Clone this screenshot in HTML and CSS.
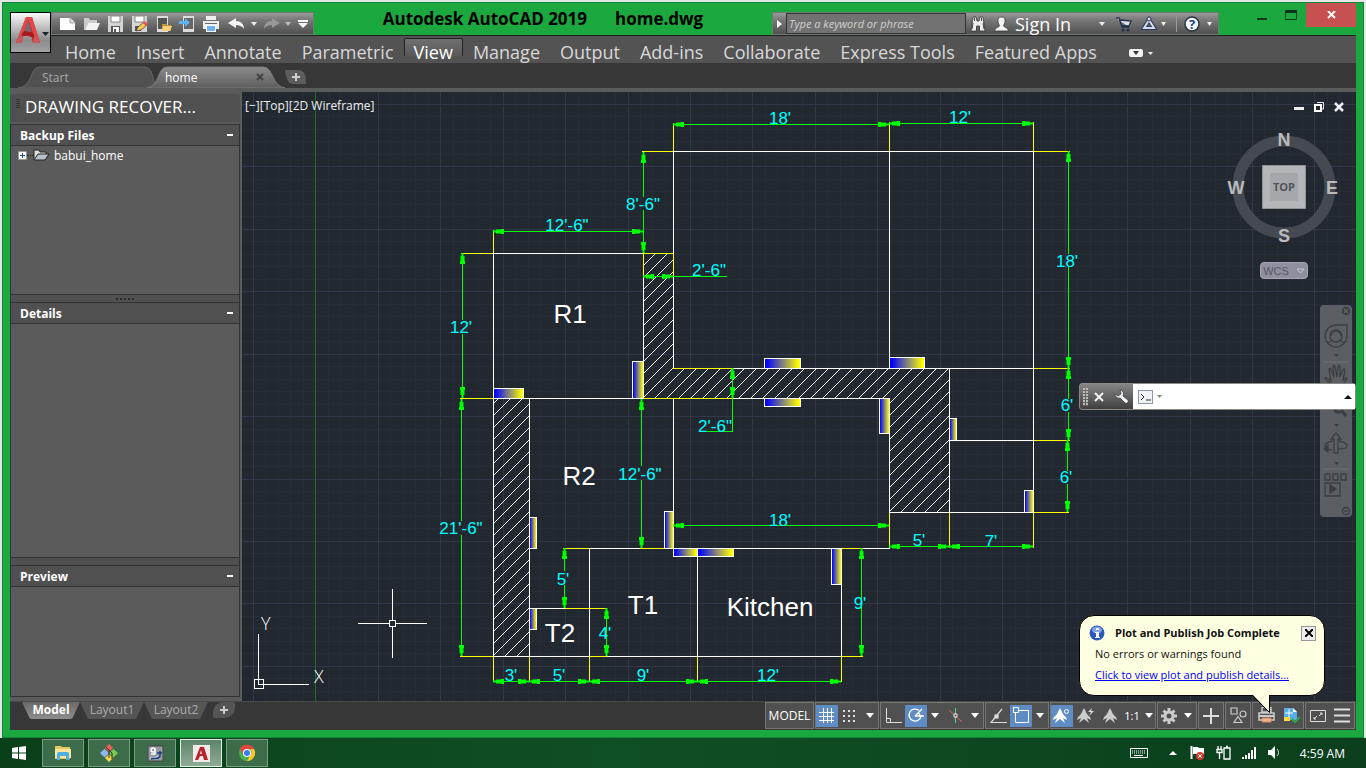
FILE: index.html
```html
<!DOCTYPE html>
<html lang="en">
<head>
<meta charset="utf-8">
<title>Autodesk AutoCAD 2019 - home.dwg</title>
<link rel="stylesheet" href="styles.css">
</head>
<body>
<div class="window">
  <header class="titlebar">
    <button class="app-button" aria-label="Application menu">
      <svg width="37" height="38" viewBox="0 0 37 38">
        <path d="M4 29 14 3h6l8 26h-7l-1.500-6-8-2-2 8z" fill="#c3272d"/>
        <path d="M14 3h6l8 26-4-1L16.500 6 8 28l-4 1z" fill="#e0484c"/>
        <path d="M12 17l4.500-10 3 11z" fill="#7b6a6b"/>
        <path d="M8 23l4-6 9 2 2 6-6-4z" fill="#a31a20"/>
        <path d="M4 29l5-8 2 1-1 7zM22 22l6 7h-7z" fill="#c95a5c"/>
        <path d="M30 18h7l-3.500 4z" fill="#1d2430"/>
      </svg>
    </button>
    <div class="quick-access">
      <button aria-label="New"><svg width="17" height="16"><path d="M1 2h10l5 5v7H1z" fill="#fff"/><path d="M11 1v6h6z" fill="#ddd" stroke="#777" stroke-width=".6"/></svg></button>
      <button aria-label="Open"><svg width="17" height="16"><path d="M1 14V2h5l1 2h7v3H5L2 14z" fill="#ccc"/><path d="M5 7h12l-3 7H2z" fill="#f3f3f3"/></svg></button>
      <button aria-label="Save"><svg width="17" height="16"><path d="M1 0h15v16H1z" fill="#d4d4d4"/><path d="M4 0h9v6H4z" fill="#fff" stroke="#888"/><path d="M4 10h9v6H4z" fill="#555"/><path d="M6 11h6v5H6z" fill="#fff"/><path d="M7 13h2v3H7z" fill="#555"/></svg></button>
      <button aria-label="Save as"><svg width="17" height="16"><path d="M1 0h15v16H1z" fill="#d4d4d4"/><path d="M4 0h9v6H4z" fill="#fff" stroke="#888"/><path d="M4 10h6v5H4z" fill="#555"/><path d="M5 15l2-4 6-5 3 3-6 5z" fill="#f7c752" stroke="#333" stroke-width=".7"/><path d="M12 7l2-2 3 3-2 2z" fill="#e0525a"/></svg></button>
      <button aria-label="Open from mobile"><svg width="17" height="16"><path d="M2 0h11v16H2z" fill="#ddd"/><path d="M3 2h9v11H3z" fill="#555"/><path d="M7 15V8h4l1 1h4v6z" fill="#c98f36"/><path d="M8 10h9l-2 5H7z" fill="#f9d27b"/></svg></button>
      <button aria-label="Save to mobile"><svg width="17" height="16"><path d="M4 0h11v16H4z" fill="#ddd"/><path d="M5 2h9v11H5z" fill="#666"/><path d="M0 5h6V2l5 4.500L6 11V8H0z" fill="#5db2f0"/></svg></button>
      <button aria-label="Plot"><svg width="18" height="16"><path d="M4 0h10v4H4zM1 5h16v8H1z" fill="#eee"/><path d="M3 7h12v1H3z" fill="#666"/><path d="M4 9h10v7H4z" fill="#fff"/><path d="M5 10h8v5H5z" fill="#6cb4ee"/></svg></button>
      <button class="undo" aria-label="Undo"><svg width="19" height="14"><path d="M1 6l8-5v3c5 0 8 3 8 8-2-3-5-4-8-4v3z" fill="#f4f4f4"/></svg></button>
      <button class="drop" aria-label="Undo list"><svg width="6" height="4"><path d="M0 0h6L3 4z" fill="#eee"/></svg></button>
      <button aria-label="Redo"><svg width="19" height="14"><path d="M18 6l-8-5v3c-5 0-8 3-8 8 2-3 5-4 8-4v3z" fill="#989898"/></svg></button>
      <button class="drop" aria-label="Redo list"><svg width="6" height="4"><path d="M0 0h6L3 4z" fill="#bbb"/></svg></button>
      <button class="customize" aria-label="Customize toolbar"><svg width="10" height="8"><path d="M0 0h10v2H0zM0 3h10L5 8z" fill="#f4f4f4"/></svg></button>
    </div>
    <h1 class="window-title"><span>Autodesk AutoCAD 2019</span><span>home.dwg</span></h1>
    <div class="info-center">
      <button class="expander" aria-label="Collapse search"><svg width="5" height="8"><path d="M0 0l5 4-5 4z" fill="#fff"/></svg></button>
      <input class="search" type="text" placeholder="Type a keyword or phrase" aria-label="Search">
      <button class="find" aria-label="Search"><svg width="16" height="16"><path d="M3 1h3l1 4h2l1-4h3l2 14H9.500V10h-3v5H1z" fill="#eee" stroke="#333" stroke-width=".8"/><path d="M3 7l-1 6M13 7l1 6M4.500 2v3M11.500 2v3" stroke="#444"/></svg></button>
      <button class="sign-in"><svg width="15" height="16"><path d="M7.500 1c3 0 4 2 3.500 5-.5 2-1.500 3-1.500 4 0 1 5 1.500 5 5H.5c0-3.500 5-4 5-5 0-1-1-2-1.500-4C3.500 3 4.500 1 7.500 1z" fill="#f2f2f2" stroke="#333" stroke-width=".8"/></svg>Sign In<svg class="push" width="6" height="4"><path d="M0 0h6L3 4z" fill="#eee"/></svg></button>
      <button class="store" aria-label="App store"><svg width="17" height="16"><path d="M1 2h3l3 9h7M5 4l11 1-2 5H6.500" fill="#dfe3ea" stroke="#1f2e4c" stroke-width="1.300"/><circle cx="8" cy="14" r="1.500" fill="#1f2e4c"/><circle cx="13" cy="14" r="1.500" fill="#1f2e4c"/></svg></button>
      <button class="linked" aria-label="Autodesk 360"><svg width="16" height="16"><path d="M8 4L3 12h10z" fill="none" stroke="#26365a" stroke-width="4"/><path d="M8 4L3 12h10z" fill="none" stroke="#d5dcea" stroke-width="2"/><circle cx="8" cy="3" r="2" fill="#d5dcea" stroke="#26365a"/></svg><svg width="5" height="4"><path d="M0 0h5L2.500 4z" fill="#eee"/></svg></button>
      <button class="help" aria-label="Help"><svg width="17" height="16"><circle cx="8" cy="8" r="7" fill="#f5f7fa" stroke="#2b3440" stroke-width="1.500"/><text x="8" y="12.500" class="help-mark">?</text></svg><svg width="5" height="4"><path d="M0 0h5L2.500 4z" fill="#eee"/></svg></button>
    </div>
    <div class="window-controls">
      <button aria-label="Minimize"><svg width="12" height="16"><path d="M0 11h10v2H0z" fill="#12341d"/></svg></button>
      <button aria-label="Maximize"><svg width="13" height="16"><path d="M.5 3.500h11v9H.5z" fill="none" stroke="#123f20"/><path d="M0 3h12v3H0z" fill="#12341d"/></svg></button>
      <button class="close" aria-label="Close"><svg width="9" height="8"><path d="M1 0l7 7M8 0L1 7" stroke="#fff" stroke-width="2"/></svg></button>
    </div>
  </header>

  <nav class="ribbon">
    <a href="#home">Home</a><a href="#insert">Insert</a><a href="#annotate">Annotate</a><a href="#parametric">Parametric</a><a href="#view" class="active">View</a><a href="#manage">Manage</a><a href="#output">Output</a><a href="#addins">Add-ins</a><a href="#collaborate">Collaborate</a><a href="#express">Express Tools</a><a href="#featured">Featured Apps</a>
    <button class="ribbon-toggle" aria-label="Minimize ribbon"><svg width="24" height="10"><rect y="1" width="14" height="8" rx="2" fill="#f4f4f4"/><path d="M4 3h6L7 7z" fill="#333"/><path d="M19 4h5l-2.500 3z" fill="#eee"/></svg></button>
  </nav>

  <div class="file-tabs">
    <a href="#start" class="file-tab">
      <svg class="tab-shape" viewBox="0 0 148 22" preserveAspectRatio="none"><path d="M0 22C16 20 11 1 22 1h104c9 0 8 10 12 21z" fill="#515151" stroke="#656565"/></svg>
      <span>Start</span></a>
    <div class="file-tab current">
      <svg class="tab-shape" viewBox="0 0 148 22" preserveAspectRatio="none"><defs><linearGradient id="tabFill" x2="0" y2="1"><stop stop-color="#8b8b8b"/><stop offset="1" stop-color="#5e5e5e"/></linearGradient></defs><path d="M0 22C13 20 10 1 20 1h96c11 0 8 19 22 21z" fill="url(#tabFill)" stroke="#7a7a7a"/></svg>
      <span>home</span>
      <button aria-label="Close home"><svg width="9" height="8"><path d="M1 1l6 6M7 1L1 7" stroke="#444" stroke-width="2"/></svg></button></div>
    <button class="new-tab" aria-label="New drawing"><svg width="22" height="15"><path d="M1 0h13c6 0 8 4 8 14H9C4 14 2 8 1 0z" fill="#5c5c5c"/><path d="M8 7h8M12 3v8" stroke="#ccc" stroke-width="2"/></svg></button>
  </div>

  <main class="workspace">
    <aside class="recovery">
      <h2 class="palette-title"><i class="grip"></i>DRAWING RECOVER...</h2>
      <section class="pane backup">
        <h3>Backup Files<button aria-label="Collapse backup files"></button></h3>
        <div class="pane-body">
          <div class="tree-item"><button class="expand" aria-label="Expand babui_home"><svg width="9" height="9"><path d="M.5.5h8v8h-8z" fill="#fff" stroke="#999"/><path d="M2 4.500h5M4.500 2v5" stroke="#264a9c"/></svg></button><i class="dots"></i><svg width="17" height="12"><path d="M1 11V1h5l1 2h6v2" fill="#ddd" stroke="#222"/><path d="M1 11l4-6h11l-4 6z" fill="#b9c0c9" stroke="#222"/></svg><span>babui_home</span></div>
        </div>
      </section>
      <div class="splitter"><i></i></div>
      <section class="pane details">
        <h3>Details<button aria-label="Collapse details"></button></h3>
        <div class="pane-body"></div>
      </section>
      <div class="splitter"></div>
      <section class="pane preview">
        <h3>Preview<button aria-label="Collapse preview"></button></h3>
        <div class="pane-body"></div>
      </section>
    </aside>

    <div class="viewport">
      <svg class="drawing" aria-label="Floor plan">
        <defs>
          <pattern id="hatch" width="12" height="12" patternUnits="userSpaceOnUse" x="493" y="404"><path d="M-1 13L13-1M-1 1L1-1M11 13l2-2" stroke="#fff" stroke-width="1" shape-rendering="crispEdges"/></pattern>
          <linearGradient id="door"><stop offset=".05" stop-color="#00f"/><stop offset=".95" stop-color="#ff0"/></linearGradient>
          <marker id="arrow" viewBox="0 0 11 6" markerWidth="11" markerHeight="6" refX="11" refY="3" markerUnits="userSpaceOnUse" orient="auto-start-reverse"><path d="M0 .5h3v.5h5v1h3v2H8v1H3v.5H0z" fill="#0f0"/></marker>
        </defs>
        <g transform="translate(-242 -92)">
          <g id="grid" class="grid"></g>
          <path class="axis" d="M315.500 92v3000"/>
          <path class="hatch" d="M643 253h30v115h276v144h-60V398H643zM493 398h36v258h-36z"/>
          <path class="wall" d="M673.500 151.500h360v361h-144M673.500 151v102M673.500 276v92M889.500 151v217M889.500 398v115M732 368.500h302M949.500 368v145M949 440.500h85M493.500 253v403M493 253.500h150M643.500 276v122M493 398.500h150M732 398.500h158M529.500 398v258M673.500 398v150M589.500 548v108M697.500 548v108M841.500 548v108M589 548.500h51M665 548.500h176M862 548.500h28M529 608.500h36M493 656.500h96M607 656.500h234"/>
          <path class="extension" d="M673.500 123v28M889.500 122v29M1033.500 122v29M642 151.500h31M1034 151.500h36M493.500 230v23M643.500 231v45M461 253.500h32M643 253.500h31M673.500 253v23M460 398.500h33M643 398.500h89M673 368.500h59M1034 368.500h36M1034 440.500h36M1034 512.500h35M889.500 513v35M949.500 513v35M1033.500 513v35M563 548.500h26M640 548.500h25M841 548.500h21M565 608.500h42M589 656.500h18M460 656.500h33M841 656.500h22M493.500 657v25M529.500 657v25M589.500 657v25M697.500 657v25M841.500 657v25"/>
          <g class="doors">
            <rect x="764.500" y="358.500" width="36" height="10"/><rect x="889.500" y="357.500" width="35" height="11"/>
            <rect x="764.500" y="398.500" width="36" height="8"/><rect x="879.500" y="398.500" width="10" height="35"/>
            <rect x="949.500" y="418.500" width="7" height="22"/><rect x="1024.500" y="490.500" width="9" height="22"/>
            <rect x="831.500" y="548.500" width="10" height="36"/><rect x="493.500" y="388.500" width="30" height="10"/>
            <rect x="632.500" y="361.500" width="11" height="37"/><rect x="529.500" y="517.500" width="7" height="31"/>
            <rect x="664.500" y="511.500" width="9" height="37"/><rect x="673.500" y="548.500" width="24" height="8"/>
            <rect x="697.500" y="548.500" width="36" height="8"/><rect x="529.500" y="608.500" width="7" height="21"/>
          </g>
          <g class="dim">
            <path class="both" d="M673 124.500h216"/><path class="both" d="M889 123.500h144"/><path class="both" d="M493 231.500h150"/>
            <path class="from" d="M643.500 152v45"/><path class="to" d="M643.500 210v43"/>
            <path class="from" d="M462.500 253v67"/><path class="to" d="M462.500 334v64"/>
            <path class="both" d="M643 276.500h30"/><path d="M673 276.500h54"/>
            <path class="from" d="M461.500 399v122"/><path class="to" d="M461.500 535v121"/>
            <path class="both" d="M732.500 368v30"/><path d="M732.500 398v33.500H706"/>
            <path class="from" d="M641.500 399v67"/><path class="to" d="M641.500 480v68"/>
            <path class="from" d="M564.500 548v23"/><path class="to" d="M564.500 585v23"/>
            <path class="both" d="M606.500 608v48"/>
            <path class="both" d="M493 681.500h36"/><path class="both" d="M529 681.500h60"/><path class="both" d="M589 681.500h108"/><path class="both" d="M697 681.500h144"/>
            <path class="both" d="M673 525.500h216"/><path class="both" d="M861.500 548v108"/>
            <path class="both" d="M889 546.500h60"/><path class="both" d="M949 546.500h84"/>
            <path class="from" d="M1068.500 151v103"/><path class="to" d="M1068.500 267v101"/>
            <path class="from" d="M1068.500 368v31"/><path class="to" d="M1068.500 412v28"/>
            <path class="from" d="M1067.500 440v31"/><path class="to" d="M1067.500 484v28"/>
          </g>
          <g class="measure">
            <text x="780" y="124">18'</text><text x="960" y="123">12'</text><text x="567" y="231">12'-6"</text>
            <text x="643" y="210">8'-6"</text><text x="461" y="333">12'</text><text x="709" y="276">2'-6"</text>
            <text x="461" y="534">21'-6"</text><text x="715" y="432">2'-6"</text><text x="640" y="480">12'-6"</text>
            <text x="563" y="585">5'</text><text x="605" y="639">4'</text><text x="511" y="681">3'</text>
            <text x="559" y="681">5'</text><text x="643" y="681">9'</text><text x="768" y="681">12'</text>
            <text x="780" y="526">18'</text><text x="860" y="609">9'</text><text x="919" y="546">5'</text>
            <text x="991" y="547">7'</text><text x="1067" y="267">18'</text><text x="1067" y="411">6'</text><text x="1066" y="483">6'</text>
          </g>
          <g class="room">
            <text x="570" y="323">R1</text><text x="579" y="485">R2</text><text x="643" y="614">T1</text><text x="560" y="642">T2</text><text x="770" y="616">Kitchen</text>
          </g>
          <path class="wall" d="M358 623.500h31M396 623.500h31M392.500 589v31M392.500 627v31M389.500 620.500h6v6h-6zM254.500 679.500h9v9h-9zM258.500 634v50.500H309"/>
          <text class="ucs" x="261" y="630">Y</text><text class="ucs" x="314" y="683">X</text>
        </g>
      </svg>

      <div class="view-label"><button>[−]</button><button>[Top]</button><button>[2D Wireframe]</button></div>
      <div class="doc-controls">
        <button aria-label="Minimize drawing"><svg width="10" height="10"><path d="M0 5h10v3H0z" fill="#eee"/></svg></button>
        <button aria-label="Restore drawing"><svg width="10" height="10"><path d="M3 .5h6.500V7H8" fill="none" stroke="#eee"/><path d="M1 3h6v6H1z" fill="#212830" stroke="#fff" stroke-width="2"/></svg></button>
        <button aria-label="Close drawing"><svg width="10" height="10"><path d="M1 1l8 8M9 1L1 9" stroke="#eee" stroke-width="2.500"/></svg></button>
      </div>

      <div class="view-cube">
        <svg width="116" height="116" viewBox="0 0 116 116">
          <circle cx="58" cy="58" r="46" fill="none" stroke="#454a52" stroke-width="11"/>
          <path d="M36.500 36.500h43v43h-43z" fill="#b4b6b9" stroke="#8f9292"/>
          <path d="M44 44h28v28H44z" fill="#a4a8ad"/>
          <g class="compass"><text x="58" y="17">N</text><text x="58" y="113">S</text><text x="10" y="65">W</text><text x="106" y="65">E</text></g>
          <text class="face" x="58" y="62">TOP</text>
        </svg>
        <button class="wcs">WCS<svg width="9" height="6"><path d="M1 1h7L4.500 5z" fill="none" stroke="#c6c6d2"/></svg></button>
      </div>

      <div class="nav-bar">
        <svg width="32" height="212" fill="none" stroke="#3b3f44" stroke-width="1.300">
          <circle cx="26" cy="6" r="3.500" fill="#3b3f44"/><path d="M24 4l4 4M28 4l-4 4" stroke="#666"/>
          <path d="M16 20h11v11a11 11 0 1 1-11-11z"/><circle cx="16" cy="31" r="6"/><path d="M8 38l4-3M24 38l-4-3M11 31a5 5 0 0 1 10 0"/>
          <path d="M14 49h5l-2.500 3z" fill="#3b3f44" stroke="none"/><path d="M3 57h26" stroke="#6a6d70"/>
          <path d="M11 80C9 75 4 75 5 73c3-1 5 2 6 3L9 65c0-2 2-2 2 0l3 7-1-10c0-2 2-2 2 0l2 10 1-10c0-2 2-2 2 0v10l3-7c1-2 2-1 2 1l-2 9 3-2c2 0 0 3-4 7"/>
          <path d="M14 104c2 4 6 4 8 2l4 5" stroke-width="3"/><path d="M14 119h5l-2.500 3z" fill="#3b3f44" stroke="none"/>
          <path d="M14 148v-14h-3l5-6 5 6h-3v14z"/><path d="M13 136c-11 2-10 8-1 9M19 136c11 2 10 8 0 8"/><path d="M8 140v7l-4-3z" fill="#3b3f44"/>
          <path d="M14 157h5l-2.500 3z" fill="#3b3f44" stroke="none"/><path d="M3 164h26" stroke="#6a6d70"/>
          <path d="M5 169h5v6H5zM13 169h5v6h-5zM21 169h5v6h-5zM5 178h15v13H5z"/><path d="M10 180v8l6-4z" fill="#3b3f44"/>
          <circle cx="26" cy="206" r="3.500"/><path d="M24 206h4"/>
        </svg>
      </div>

      <div class="command-line">
        <i class="grip-dots"></i>
        <button aria-label="Close command line"><svg width="10" height="10"><path d="M1 1l8 8M9 1L1 9" stroke="#f4f4f4" stroke-width="2"/></svg></button>
        <button aria-label="Customize command line"><svg width="15" height="15"><path d="M6 1a4 4 0 0 1 3 6l5 4c1 2-1 4-3 3L6 9a4 4 0 0 1-5-4l3 2 3-2-1-4z" fill="#eef1f4" stroke="#30363c" stroke-width=".7"/></svg></button>
        <div class="command-field">
          <svg width="24" height="14"><rect x=".5" y=".5" width="14" height="13" fill="#eef1f5" stroke="#8d99a8"/><path d="M3 4l3 3-3 3M8 10h5" fill="none" stroke="#333"/><path d="M19 5h5l-2.500 3z" fill="#888"/></svg>
          <input type="text" aria-label="Command">
          <svg width="8" height="4"><path d="M4 0l4 4H0z" fill="#111"/></svg>
        </div>
      </div>
    </div>
  </main>

  <footer class="status-row">
    <nav class="layout-tabs">
      <a href="#model" class="current">Model</a><a href="#layout1">Layout1</a><a href="#layout2">Layout2</a><button aria-label="New layout"><svg width="10" height="10"><path d="M1 5h8M5 1v8" stroke="#ccc" stroke-width="2"/></svg></button>
    </nav>
    <div class="status-bar">
      <div class="group"><button class="space">MODEL</button></div>
      <div class="group">
        <button class="on" aria-label="Grid"><svg width="16" height="16" stroke="#fff"><path d="M0 4.500h15M0 8.500h15M0 12.500h15M4.500 0v15M8.500 0v15M12.500 0v15"/></svg></button>
        <button class="w24" aria-label="Snap"><svg width="14" height="14" fill="#ddd"><path d="M0 1h2v2H0zM5 1h2v2H5zM10 1h2v2h-2zM0 6h2v2H0zM5 6h2v2H5zM10 6h2v2h-2zM0 11h2v2H0zM5 11h2v2H5zM10 11h2v2h-2z"/></svg></button>
        <button class="caret" aria-label="Snap menu"></button>
      </div>
      <div class="group">
        <button class="w24" aria-label="Ortho"><svg width="17" height="17" fill="none" stroke="#ddd"><path d="M1.500 1v14.500H17M1.500 11.500h4v4"/></svg></button>
        <button class="on" aria-label="Polar tracking"><svg width="18" height="17" fill="none" stroke="#fff" stroke-width="1.300"><path d="M12 3.500A6 6 0 1 0 14 9M8 9l7-7M8 9h9M11 5l3 5"/></svg></button>
        <button class="caret" aria-label="Polar menu"></button>
        <button class="w24" aria-label="Isometric drafting"><svg width="15" height="17" fill="none"><path d="M1 3l13 12" stroke="#d66"/><path d="M7.500 1v15" stroke="#5c8"/><path d="M6 7h3v3H6z" fill="#555" stroke="#eee"/></svg></button>
        <button class="caret" aria-label="Isometric menu"></button>
      </div>
      <div class="group">
        <button class="w24" aria-label="Object snap tracking"><svg width="17" height="16" fill="none" stroke="#ddd" stroke-width="1.200"><path d="M12 1L1 14.500h16"/><path d="M5 7h3v3H5z" fill="#ddd"/></svg></button>
        <button class="on" aria-label="Object snap"><svg width="17" height="17" fill="none" stroke="#fff"><path d="M6 3.500h9.500v12h-13V6M.5.500h5v5h-5z"/></svg></button>
        <button class="caret" aria-label="Object snap menu"></button>
      </div>
      <div class="group">
        <button class="on" aria-label="Annotation visibility"><svg width="18" height="16"><path d="M7 0c2 3 2 6 6 9l1 3-4-2 2 5-5-4-5 4 2-5-4 2 1-3c4-3 4-6 6-9z" fill="#fff"/><circle cx="13.500" cy="3.500" r="2" fill="none" stroke="#fff"/></svg></button>
        <button class="w26" aria-label="Auto scale"><svg width="18" height="16"><path d="M7 0c2 3 2 6 6 9l1 3-4-2 2 5-5-4-5 4 2-5-4 2 1-3c4-3 4-6 6-9z" fill="#ccc"/><path d="M15 0l-4 4h3l-2 4 5-5h-3z" fill="#ddd"/></svg></button>
        <button aria-label="Annotation scale icon"><svg width="15" height="16"><path d="M7 0c2 3 2 6 6 9l1 3-4-2 2 5-5-4-5 4 2-5-4 2 1-3c4-3 4-6 6-9z" fill="#ccc"/></svg></button>
        <button class="scale">1:1</button><button class="caret narrow" aria-label="Scale menu"></button>
      </div>
      <div class="group">
        <button aria-label="Workspace"><svg width="16" height="16"><circle cx="8" cy="8" r="4" fill="none" stroke="#ccc" stroke-width="3"/><path d="M8 0v3M8 13v3M0 8h3M13 8h3M2.500 2.500l2 2M11.500 11.500l2 2M13.500 2.500l-2 2M2.500 13.500l2-2" stroke="#ccc" stroke-width="3"/></svg></button>
        <button class="caret" aria-label="Workspace menu"></button>
      </div>
      <div class="group"><button class="w24" aria-label="Annotation monitor"><svg width="16" height="16"><path d="M0 8h16M8 0v16" stroke="#ddd" stroke-width="2"/></svg></button></div>
      <div class="group"><button class="w24" aria-label="Isolate objects"><svg width="17" height="17" fill="none" stroke="#ccc" stroke-width="1.200"><path d="M1 1h6v6H1zM8 9.500l4 6H4z"/><circle cx="13" cy="7" r="3"/></svg></button></div>
      <div class="group">
        <button class="w26" aria-label="Plot status"><svg width="17" height="17"><path d="M4 0h9v5H4zM1 6h15v7H1z" fill="none" stroke="#ccc" stroke-width="1.500"/><path d="M1 8h15v2H1z" fill="#ccc"/><path d="M4 11h9v4H4z" fill="#f0b58e" stroke="#d9875a"/></svg></button>
        <button class="w24" aria-label="Plot job complete"><svg width="17" height="17"><path d="M1 1h9l4 4v8H1z" fill="#58aee8"/><path d="M10 1v4h4" fill="#fff"/><path d="M1 10h6v4H1z" fill="#ffd83b"/><path d="M6 2v8M2 6h8" stroke="#fff"/><path d="M9 12l3 3 5-5" fill="none" stroke="#31a24c" stroke-width="2"/></svg></button>
      </div>
      <div class="group">
        <button class="w24" aria-label="Clean screen"><svg width="17" height="12" fill="none" stroke="#ddd"><path d="M.5.500h15v11H.5zM9 6l3-3M10 3h2v2M7 6L4 9M4 7v2h2"/></svg></button>
        <button class="w24" aria-label="Customization"><svg width="16" height="15"><path d="M0 1.500h16M0 7.500h16M0 13.500h16" stroke="#ddd" stroke-width="2"/></svg></button>
      </div>
      <div class="balloon" role="status">
        <svg class="balloon-tail" width="20" height="20"><path d="M1 0l17.500 18V0z" fill="#ffffe1"/><path d="M1 1l17.500 17.500V1" fill="none" stroke="#000"/></svg>
        <div class="balloon-head">
          <svg width="16" height="16"><circle cx="8" cy="8" r="7.500" fill="#2a59b8"/><ellipse cx="8" cy="5" rx="5" ry="3.500" fill="#7fa5e3"/><path d="M7 3h3v2H7zM6 7h4v5h1v1H6v-1h1V8H6z" fill="#fff"/></svg>
          <strong>Plot and Publish Job Complete</strong>
          <button aria-label="Dismiss"><svg width="8" height="8"><path d="M0 0l8 8M8 0L0 8" stroke="#000" stroke-width="2"/></svg></button>
        </div>
        <p>No errors or warnings found</p>
        <a href="#details">Click to view plot and publish details...</a>
      </div>
    </div>
  </footer>
</div>

<div class="taskbar">
  <button class="start" aria-label="Start"><svg width="14" height="14" fill="#fff"><path d="M0 2l6-1v5.500H0zM7 1l7-1v6.500H7zM0 7.500h6V13l-6-1zM7 7.500h7V14l-7-1z"/></svg></button>
  <button class="task" aria-label="File Explorer"><svg width="18" height="16"><path d="M1 3V1h6l1 1h8v12H1z" fill="#e8c85e"/><path d="M1 4h16v9H1z" fill="#f7e6a0"/><path d="M3 15V9c0-2 2-2 3-2h6c2 0 3 0 3 2v6h-3v-4H6v4z" fill="#4fb0e0"/></svg></button>
  <button class="task" aria-label="Git client"><svg width="18" height="18"><path d="M9 0l4 4-4 4-4-4z" fill="#f05b5b"/><path d="M4.500 5L9 9l-4.500 4.500L0 9z" fill="#8db8f4"/><path d="M13.500 5L18 9l-4.500 4.500L9 9z" fill="#7ccc4a"/><path d="M9 10l4 4-4 4-4-4z" fill="#f6d949"/><path d="M6 3l6 6v6M9 6v8" stroke="#333" fill="none"/></svg></button>
  <button class="task" aria-label="Utility"><svg width="17" height="17"><path d="M1 1h15v15H1z" fill="#969ba2" stroke="#444"/><circle cx="6" cy="5" r="2" fill="none" stroke="#fff" stroke-width="1.300"/><path d="M8 3v6H4M3 13c4 2 7-3 10 0" fill="none" stroke="#fff" stroke-width="1.300"/><path d="M4 14c5-2 8 1 9-3V6M10 8h5" fill="none" stroke="#183f80" stroke-width="1.500"/></svg></button>
  <button class="task active" aria-label="AutoCAD"><svg width="17" height="17"><path d="M0 0h17v17H0z" fill="#f4e9e9"/><path d="M2 15L7 2h4l4 13h-4l-1-4H7l-2 4z" fill="#b8202a"/><path d="M8 5l1 4H7z" fill="#f4e9e9"/></svg></button>
  <button class="task" aria-label="Chrome"><svg width="18" height="18" viewBox="0 0 18 18"><circle cx="9" cy="9" r="8" fill="#4caf50"/><path d="M2 5a8 8 0 0 1 14 0H9a4 4 0 0 0-4 5z" fill="#e5443a"/><path d="M16 5a8 8 0 0 1-7 12l4-7c1-2 0-4-1-5z" fill="#fbc72d"/><circle cx="9" cy="9" r="4" fill="#fff"/><circle cx="9" cy="9" r="3" fill="#3a7cec"/></svg></button>
  <div class="tray">
    <button aria-label="Touch keyboard"><svg width="18" height="11"><path d="M.5.500h17v9H.5z" fill="none" stroke="#fff"/><path d="M2 3h14M2 5h14" stroke="#fff" stroke-dasharray="1 1"/><path d="M4 7.500h9" stroke="#fff"/></svg></button>
    <button aria-label="Show hidden icons"><svg width="8" height="4"><path d="M4 0l4 4H0z" fill="#fff"/></svg></button>
    <button aria-label="Action center"><svg width="16" height="16"><path d="M1.500 1v13" stroke="#fff" stroke-width="2"/><path d="M3 2h5l1 1h5v6H3z" fill="#fff"/><circle cx="10" cy="11" r="4" fill="#d8342c"/><path d="M8 9l4 4M12 9l-4 4" stroke="#fff"/></svg></button>
    <button aria-label="Battery"><svg width="16" height="16" fill="none" stroke="#fff"><path d="M1 4.500h5v3H1zM2 1v4M5 1v4M3.500 8v6M8 3h6v11H8zM10 1.500h2" stroke-width="1.300"/></svg></button>
    <button aria-label="Network"><svg width="16" height="12" fill="#fff"><path d="M0 10h2v2H0zM3 8h2v4H3zM6 6h2v6H6zM9 3h2v9H9zM12 0h2v12h-2z"/></svg></button>
    <button aria-label="Volume"><svg width="14" height="14"><path d="M0 4h3l4-4v13L3 9H0z" fill="#fff"/><path d="M9 3c2 2 2 5 0 7" fill="none" stroke="#ddd"/></svg></button>
    <time>4:59 AM</time>
  </div>
</div>
<script src="grid.js"></script>
</body>
</html>
```

FILE: grid.js
```js
// Background grid: minor line every step, major line every fifth.
(function () {
  var group = document.getElementById("grid");
  var step = 12.49;
  var minor = "", major = "";
  for (var i = -1; i < 240; i++) {
    var x = Math.floor(253.3 + i * step) + 0.5;
    var y = Math.floor(104.3 + i * step) + 0.5;
    var line = "M" + x + " 90v3000M240 " + y + "h3000";
    if (i % 5 === 0) major += line; else minor += line;
  }
  [["minor", minor], ["major", major]].forEach(function (item) {
    var path = document.createElementNS("http://www.w3.org/2000/svg", "path");
    path.setAttribute("class", item[0]);
    path.setAttribute("d", item[1]);
    group.appendChild(path);
  });
})();
```

FILE: styles.css
```css
* { box-sizing: border-box; }

body {
  margin: 0;
  height: 100vh;
  display: flex;
  flex-direction: column;
  background: #e4e6e6;
  font-family: "Open Sans", "Noto Sans", sans-serif;
  font-size: 12px;
  overflow: hidden;
}

button {
  margin: 0;
  padding: 0;
  border: 0;
  background: none;
  color: inherit;
  font: inherit;
  display: flex;
  flex: none;
  align-items: center;
  justify-content: center;
  white-space: nowrap;
}
a { text-decoration: none; color: inherit; }
svg { display: block; flex: none; }
h1, h2, h3, p { margin: 0; }

/* Window frame */
.window {
  flex: 1;
  min-height: 0;
  margin: 2px 2px 0;
  padding: 0 7px 7px;
  border: 1px solid #12853a;
  background: #1ba83e;
  display: flex;
  flex-direction: column;
}
.titlebar {
  position: relative;
  height: 33px;
  flex: none;
  display: flex;
  align-items: flex-start;
  border-bottom: 1px solid #222;
}
.app-button {
  position: absolute;
  z-index: 2;
  left: 0;
  top: 9px;
  width: 41px;
  height: 41px;
  border: 1px solid #000;
  background: linear-gradient(#fafafa, #8b8b8b 70%, #a3a3a3);
}
.quick-access, .info-center {
  margin-top: 9px;
  height: 23px;
  display: flex;
  flex: none;
  align-items: center;
  border: 1px solid #6f7a70;
  background: linear-gradient(#999, #777 35%, #505050);
}
.quick-access { margin-left: 41px; padding-left: 3px; }
.quick-access button { width: 24px; }
.quick-access .undo { width: 26px; }
.quick-access .drop { width: 10px; }
.quick-access .customize { width: 20px; }
.window-title {
  flex: 1;
  padding-top: 4px;
  display: flex;
  justify-content: center;
  gap: 28px;
  font-size: 17px;
  line-height: 24px;
  color: #000;
  white-space: nowrap;
}
.info-center { width: 447px; }
.expander { width: 13px; height: 21px; }
.search {
  width: 180px;
  height: 21px;
  padding: 0 2px;
  border: 1px solid #333;
  background: #727272;
  color: #ddd;
  font: italic 11px "Open Sans", sans-serif;
}
.search::placeholder { color: #d0d0d0; opacity: 1; }
.find { width: 24px; }
.sign-in {
  width: 120px;
  gap: 6px;
  padding: 0 5px 0 4px;
  justify-content: flex-start;
  color: #fff;
  font-size: 18px;
  line-height: 20px;
}
.push { margin-left: auto; }
.store { width: 26px; }
.linked { width: 40px; gap: 4px; padding-left: 5px; justify-content: flex-start; }
.help { width: 42px; height: 17px; gap: 6px; border-left: 1px solid #999; }
.help-mark { font: bold 13px "Open Sans", sans-serif; fill: #1c3f94; text-anchor: middle; }
.window-controls { margin-left: 30px; display: flex; }
.window-controls button { width: 28px; height: 24px; }
.window-controls .close { width: 50px; margin-left: 1px; background: #c75050; }

/* Ribbon */
.ribbon {
  height: 27px;
  flex: none;
  padding: 2px 0 0 45px;
  display: flex;
  background: #535353;
  color: #d8d8d8;
  font-size: 18px;
  white-space: nowrap;
}
.ribbon a { height: 18px; padding: 0 9px; border: 1px solid transparent; border-bottom: 0; line-height: 27px; }
.ribbon .active {
  color: #fff;
  background: linear-gradient(#707070, #585858);
  border-color: #222;
  border-radius: 2px 2px 0 0;
}
.ribbon-toggle { margin-left: 22px; height: 30px; }

/* Document tabs */
.file-tabs {
  height: 25px;
  flex: none;
  padding: 3px 0 0 8px;
  display: flex;
  background: #373737;
}
.file-tab {
  position: relative;
  width: 123px;
  height: 22px;
  display: flex;
  align-items: center;
  padding-left: 24px;
  color: #aaa;
}
.file-tab > :not(.tab-shape) { position: relative; }
.file-tab.current { margin-left: 6px; width: 130px; padding-left: 18px; color: #fff; }
.file-tab.current button { margin-left: auto; margin-right: 12px; }
.tab-shape { position: absolute; left: 0; top: 0; width: 148px; height: 22px; }
.new-tab { margin-left: 7px; height: 22px; }

/* Workspace */
.workspace { flex: 1; min-height: 0; display: flex; background: #5b5b5b; }
.recovery {
  width: 232px;
  flex: none;
  padding: 6px 2px 4px 0;
  display: flex;
  flex-direction: column;
  color: #fff;
}
.palette-title {
  height: 28px;
  flex: none;
  margin-bottom: 2px;
  display: flex;
  gap: 5px;
  padding-left: 6px;
  background: #505050;
  border-radius: 3px 3px 0 0;
  font-weight: 400;
  font-size: 17px;
  line-height: 26px;
}
.grip { width: 4px; height: 10px; margin-top: 5px; background: repeating-linear-gradient(#333 0 1px, transparent 1px 2px); }
.pane { display: flex; flex-direction: column; min-height: 0; border: 1px solid #333; }
.pane h3 {
  height: 21px;
  flex: none;
  display: flex;
  align-items: center;
  justify-content: space-between;
  padding: 0 6px 0 9px;
  background: #505050;
  border-bottom: 1px solid #333;
  font-size: 12px;
}
.pane h3 button { width: 6px; height: 2px; background: #fff; }
.backup { flex: 171 1 0; }
.details { flex: 257 1 0; }
.preview { flex: 131 1 0; }
.splitter { height: 7px; flex: none; display: flex; justify-content: center; align-items: center; background: #505050; border: solid #333; border-width: 0 1px; }
.splitter i { width: 18px; height: 2px; background: repeating-linear-gradient(90deg, #2c2c2c 0 2px, transparent 2px 4px); }
.tree-item { display: flex; align-items: center; height: 18px; padding-left: 7px; }
.tree-item span { margin-left: 4px; }
.dots { width: 6px; border-top: 1px dotted #222; }

/* Drawing area */
.viewport { position: relative; flex: 1; min-width: 0; margin-top: 4px; background: #212830; overflow: hidden; }
.drawing { width: 100%; height: 100%; }
.grid path { fill: none; shape-rendering: crispEdges; }
.grid .minor { stroke: #262d38; }
.grid .major { stroke: #323849; }
.axis { stroke: #226e27; shape-rendering: crispEdges; }
.hatch { fill: url(#hatch); }
.wall, .extension, .dim path { fill: none; shape-rendering: crispEdges; }
.wall { stroke: #fff; }
.extension { stroke: #ff0; }
.doors { fill: url(#door); stroke: #fff; shape-rendering: crispEdges; }
.dim path { stroke: #0f0; }
.dim .both, .dim .from { marker-start: url(#arrow); }
.dim .both, .dim .to { marker-end: url(#arrow); }
.measure, .room { font-family: "Liberation Sans", sans-serif; text-anchor: middle; }
.measure { font-size: 17px; fill: #0ff; }
.room { font-size: 26px; fill: #fff; }
.ucs { font-family: "Open Sans", sans-serif; font-weight: 300; font-size: 18px; fill: #fff; }

.view-label { position: absolute; left: 3px; top: 5px; display: flex; color: #eee; }
.doc-controls { position: absolute; right: 12px; top: 10px; display: flex; gap: 10px; }
.view-cube { position: absolute; right: 14px; top: 37px; display: flex; flex-direction: column; align-items: center; gap: 17px; }
.compass { font: bold 18px "Liberation Sans", sans-serif; fill: #b9babc; text-anchor: middle; }
.face { font: bold 11px "Open Sans", sans-serif; fill: #50545a; text-anchor: middle; }
.wcs {
  width: 48px;
  height: 17px;
  gap: 7px;
  background: #8f909f;
  border: 1px solid #a5a6b1;
  border-radius: 4px;
  color: #555864;
  font: 11px "Liberation Sans", sans-serif;
}
.nav-bar { position: absolute; right: 4px; top: 213px; border-radius: 4px; background: #5b5f63; }
.command-line {
  position: absolute;
  right: 0;
  top: 291px;
  width: 277px;
  height: 27px;
  display: flex;
  align-items: center;
  border: 1px solid #8a8a8a;
  border-radius: 3px;
  background: linear-gradient(#858585, #404040);
}
.command-line > button { width: 22px; }
.grip-dots { width: 5px; height: 18px; margin-left: 3px; background: repeating-linear-gradient(transparent 0 2px, #666 2px 3px), repeating-linear-gradient(90deg, #bbb 0 2px, transparent 2px 3px); }
.command-field { flex: 1; height: 25px; margin-left: 1px; display: flex; align-items: center; background: #fff; padding: 0 3px 0 5px; }
.command-field input { flex: 1; min-width: 0; border: 0; outline: 0; }

/* Layout tabs and status bar */
.status-row { height: 29px; flex: none; display: flex; background: #373737; border-top: 1px solid #4a4a4a; }
.layout-tabs { display: flex; padding-left: 12px; height: 17px; color: #aaa; }
.layout-tabs a {
  width: 64px;
  text-align: center;
  line-height: 16px;
  background: #555;
  border-radius: 0 0 10px 10px;
  clip-path: polygon(0 0, 100% 0, calc(100% - 8px) 100%, 8px 100%);
}
.layout-tabs .current { width: 58px; background: linear-gradient(#6a6a6a, #8c8c8c); color: #fff; font-weight: 700; }
.layout-tabs button { width: 22px; height: 16px; margin-left: 5px; background: #555; border-radius: 10px 2px 10px 2px; }
.status-bar { position: relative; margin-left: auto; padding-right: 1px; display: flex; gap: 1px; height: 27px; background: #444; }
.group { display: flex; align-items: center; border: 1px solid #777; background: #505050; color: #fff; }
.group button { height: 22px; width: 22px; }
.group .on { background: #5f8dc3; }
.group .w24 { width: 24px; }
.group .w26 { width: 26px; }
.group .space { width: 47px; }
.group .scale { width: 22px; font-size: 11px; }
.group .caret { width: 16px; }
.group .caret::before { content: ""; border: 4px solid transparent; border-top: 5px solid #fff; border-bottom: 0; }
.group .narrow { width: 12px; }

.balloon {
  position: absolute;
  right: 31px;
  bottom: 33px;
  width: 246px;
  height: 81px;
  padding: 7px 8px 0 9px;
  border: 1px solid #000;
  border-radius: 15px;
  background: #ffffe1;
  color: #111;
  line-height: 20px;
  font-size: 11px;
  white-space: nowrap;
}
.balloon-tail { position: absolute; left: 171px; top: 78px; }
.balloon-head { display: flex; align-items: center; gap: 10px; height: 20px; }
.balloon-head button { width: 15px; height: 15px; margin-left: auto; border: 1px solid #999; background: #eee; }
.balloon p { padding: 1px 6px 0; }
.balloon a { display: block; padding: 1px 6px 0; color: #00f; text-decoration: underline; }

/* Taskbar */
.taskbar {
  height: 30px;
  flex: none;
  display: flex;
  align-items: center;
  gap: 4px;
  background: linear-gradient(90deg, #0a4019, #0f4f25 45%, #0b3f1d);
  color: #fff;
}
.start { width: 38px; }
.task { width: 42px; height: 28px; border: 1px solid #7d9c86; background: #3d6c4b; }
.task.active { border-color: #e4eee6; background: linear-gradient(#5d8568, #8fab96); }
.tray { margin-left: auto; padding-right: 21px; display: flex; align-items: center; gap: 10px; }
.tray button:first-child { margin-right: 11px; }
.tray button:nth-child(2) { margin-right: 3px; }
.tray time { margin-left: 8px; font-size: 12px; }
```
